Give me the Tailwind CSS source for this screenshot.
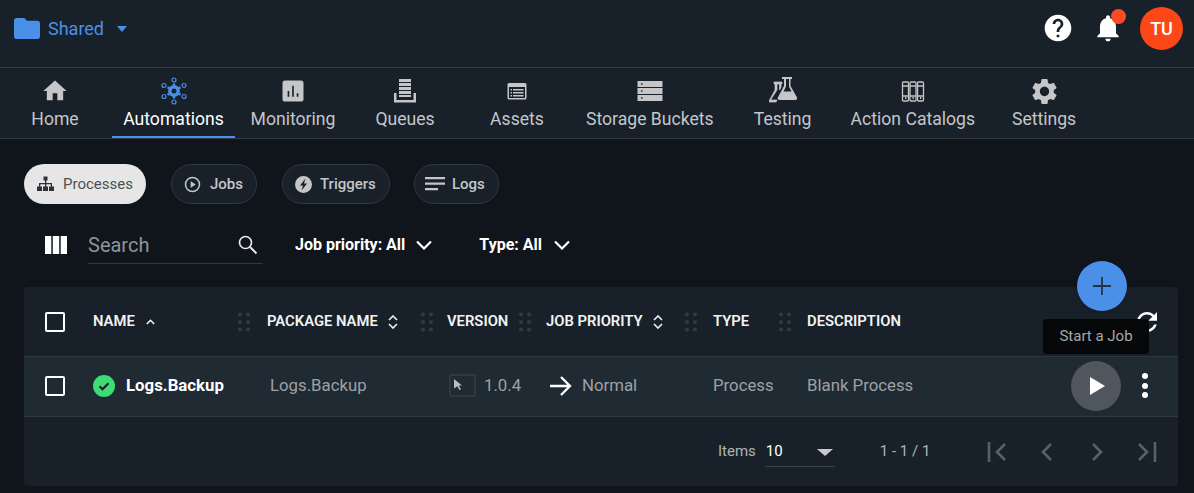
<!DOCTYPE html>
<html lang="en">
<head>
  <meta charset="UTF-8" />
  <title>Processes</title>
  <script src="https://cdn.jsdelivr.net/npm/@tailwindcss/browser@4"></script>
</head>
<body class="bg-[#0f151b] font-[Roboto,sans-serif] h-[493px] overflow-hidden relative">
  <!-- Top bar -->
  <header class="h-[68px] bg-[#18212a] border-b border-[#333a41] flex items-center pl-[14px] pr-[11px] pb-[11px]">
    <svg class="w-[26px] h-[21px] text-[#4a90e8]" viewBox="2 4 20 16" preserveAspectRatio="none" fill="currentColor"><path d="M10 4H4c-1.1 0-1.99.9-1.99 2L2 18c0 1.1.9 2 2 2h16c1.1 0 2-.9 2-2V8c0-1.1-.9-2-2-2h-8l-2-2z"/></svg>
    <span class="ml-[8px] text-[18px] text-[#4a90e8]">Shared</span>
    <span class="ml-[13px] mt-[1px] w-0 h-0 border-x-[5.5px] border-x-transparent border-t-[6px] border-t-[#4a90e8]"></span>
    <div class="ml-auto flex items-center">
      <svg class="w-[32px] h-[32px] text-white" viewBox="0 0 24 24" fill="currentColor"><path d="M12 2C6.48 2 2 6.48 2 12s4.48 10 10 10 10-4.48 10-10S17.52 2 12 2zm1 17h-2v-2h2v2zm2.07-7.75l-.9.92C13.45 12.9 13 13.5 13 15h-2v-.5c0-1.1.45-2.1 1.17-2.83l1.24-1.26c.37-.36.59-.86.59-1.41 0-1.1-.9-2-2-2s-2 .9-2 2H8c0-2.21 1.79-4 4-4s4 1.79 4 4c0 .88-.36 1.68-.93 2.25z"/></svg>
      <div class="relative ml-[18px] w-[32px] h-[32px]">
        <svg class="w-[32px] h-[32px] text-white" viewBox="0 0 24 24" fill="currentColor"><path d="M12 22c1.1 0 2-.9 2-2h-4c0 1.1.89 2 2 2zm6-6v-5c0-3.07-1.64-5.64-4.5-6.32V4c0-.83-.67-1.5-1.5-1.5s-1.5.67-1.5 1.5v.68C7.63 5.36 6 7.92 6 11v5l-2 2v1h16v-1l-2-2z"/></svg>
        <span class="absolute top-[-3px] right-[-2px] w-[15px] h-[15px] rounded-full bg-[#fb4c26]"></span>
      </div>
      <div class="ml-[16px] w-[43px] h-[43px] rounded-full bg-[#fd4716] text-white text-[18px] font-medium flex items-center justify-center">TU</div>
    </div>
  </header>

  <!-- Main nav -->
  <nav class="h-[71px] bg-[#18212a] border-b border-[#333a41] flex gap-[2px] text-[17.6px] text-[#c4c6c8]">
    <a class="min-w-[110px] px-3 flex flex-col items-center pt-[9px]">
      <svg class="w-[28px] h-[28px]" viewBox="0 0 24 24" fill="currentColor"><path d="M10 20v-6h4v6h5v-8h3L12 3 2 12h3v8z"/></svg>
      <span class="mt-[1px] leading-[26px]">Home</span>
    </a>
    <a class="w-[123px] mr-[1px] flex flex-col items-center pt-[9px] border-b-2 border-[#4a90e8] h-[70px] text-white">
      <svg class="w-[28px] h-[28px] text-[#4a90e8]" viewBox="-14 -14 28 28" fill="none" stroke="currentColor" stroke-width="1.2">
        <circle cx="0" cy="-11" r="2"/><circle cx="0" cy="11" r="2"/><circle cx="-10" cy="-5.5" r="2"/><circle cx="10" cy="-5.5" r="2"/><circle cx="-10" cy="5.5" r="2"/><circle cx="10" cy="5.5" r="2"/>
        <circle cx="0" cy="0" r="4.2" stroke-width="3.4"/>
        <path d="M0-7.5v2M0 7.5v-2M-6.5-3.7l1.7 1M6.5-3.7l-1.7 1M-6.5 3.7l1.7-1M6.5 3.7l-1.7-1" stroke-width="2.4"/>
      </svg>
      <span class="mt-[1px] leading-[26px]">Automations</span>
    </a>
    <a class="min-w-[110px] px-3 flex flex-col items-center pt-[9px]">
      <svg class="w-[28px] h-[28px]" viewBox="0 0 24 24" fill="currentColor"><path d="M19 3H5c-1.1 0-2 .9-2 2v14c0 1.1.9 2 2 2h14c1.1 0 2-.9 2-2V5c0-1.1-.9-2-2-2zM8.8 17H7.4v-5h1.4v5zm3.9 0h-1.4V7.5h1.4V17zm3.9 0h-1.4v-3h1.4v3z" fill-rule="evenodd"/></svg>
      <span class="mt-[1px] leading-[26px]">Monitoring</span>
    </a>
    <a class="min-w-[110px] px-3 flex flex-col items-center pt-[9px]">
      <svg class="w-[28px] h-[28px]" viewBox="0 0 28 28" fill="currentColor"><path d="M8 2h12v3H8zM8 6h12v3H8zM8 10h12v3H8zM8 14h12v3H8zM8 18h12v2H8zM3 16h2.5v7h17v-7H25v9.5H3z"/></svg>
      <span class="mt-[1px] leading-[26px]">Queues</span>
    </a>
    <a class="min-w-[110px] px-3 flex flex-col items-center pt-[9px]">
      <svg class="w-[28px] h-[28px]" viewBox="0 0 28 28"><rect x="4.500" y="6" width="19" height="16.5" rx="1.5" fill="currentColor"/><rect x="6" y="10" width="16" height="11" fill="#18212a"/><path d="M7.5 12H9v1.500H7.500zM10 12h10.500v1.500H10zM7.500 15H9v1.500H7.500zM10 15h10.500v1.500H10zM7.500 18H9v1.500H7.500zM10 18h10.500v1.500H10z" fill="currentColor"/></svg>
      <span class="mt-[1px] leading-[26px]">Assets</span>
    </a>
    <a class="min-w-[110px] px-3 flex flex-col items-center pt-[9px]">
      <svg class="w-[28px] h-[28px]" viewBox="0 0 28 28" fill="currentColor"><path fill-rule="evenodd" d="M1.500 4h25v6h-25zM5 6.200v1.500h1.500V6.200zM1.500 11h25v6h-25zM5 13.200v1.500h1.500v-1.500zM1.500 18h25v6h-25zM5 20.200v1.500h1.500v-1.500z"/></svg>
      <span class="mt-[1px] leading-[26px]">Storage Buckets</span>
    </a>
    <a class="min-w-[110px] px-3 flex flex-col items-center pt-[9px]">
      <svg class="w-[28px] h-[28px]" viewBox="0 0 28 28" fill="currentColor"><path fill-rule="evenodd" d="M13 0h10v2h-1.500v7L28 20.500c.5 1.300-.3 2.500-1.700 2.500H10.500c-1.500 0-2.200-1.200-1.700-2.500L15 9V2h-2zM17 2v7.500L14.500 14.500h8L20 9.500V2z"/><path stroke="currentColor" stroke-width=".7" d="M5 5h8v2h-1v3.500l-1.500 2.500V7H8v6L1.500 23H8l-.9 2H0c-.4 0 0-1 .3-1.500L6 13V7H5z"/></svg>
      <span class="mt-[1px] leading-[26px]">Testing</span>
    </a>
    <a class="min-w-[110px] px-3 -ml-[1px] flex flex-col items-center pt-[9px]">
      <svg class="w-[28px] h-[28px]" viewBox="0 0 28 28" fill="none" stroke="currentColor" stroke-width="1.3"><rect x="3.500" y="5" width="6" height="19" rx="1"/><rect x="11" y="5" width="6" height="19" rx="1"/><rect x="18.500" y="5" width="6" height="19" rx="1"/><path d="M3.500 9h6M11 9h6M18.500 9h6M3.500 19h6M11 19h6M18.500 19h6"/><path d="M6 21h1.300M13.500 21h1.300M21 21h1.300" stroke-width="2"/></svg>
      <span class="mt-[1px] leading-[26px]">Action Catalogs</span>
    </a>
    <a class="min-w-[110px] px-3 flex flex-col items-center pt-[9px]">
      <svg class="w-[31px] h-[31px] -my-[1.5px]" viewBox="0 0 24 24" fill="currentColor"><path d="M19.14 12.94c.04-.3.06-.61.06-.94 0-.32-.02-.64-.07-.94l2.03-1.58c.18-.14.23-.41.12-.61l-1.92-3.32c-.12-.22-.37-.29-.59-.22l-2.39.96c-.5-.38-1.03-.7-1.62-.94l-.36-2.54c-.04-.24-.24-.41-.48-.41h-3.84c-.24 0-.43.17-.47.41l-.36 2.54c-.59.24-1.13.57-1.62.94l-2.39-.96c-.22-.08-.47 0-.59.22L2.74 8.87c-.12.21-.08.47.12.61l2.03 1.58c-.05.3-.09.63-.09.94s.02.64.07.94l-2.03 1.58c-.18.14-.23.41-.12.61l1.92 3.32c.12.22.37.29.59.22l2.39-.96c.5.38 1.03.7 1.62.94l.36 2.54c.05.24.24.41.48.41h3.84c.24 0 .44-.17.47-.41l.36-2.54c.59-.24 1.13-.56 1.62-.94l2.39.96c.22.08.47 0 .59-.22l1.920-3.32c.12-.22.07-.47-.12-.61l-2.01-1.58zM12 15.6c-1.98 0-3.6-1.62-3.6-3.6s1.62-3.6 3.6-3.6 3.6 1.62 3.6 3.6-1.62 3.6-3.6 3.6z"/></svg>
      <span class="mt-[1px] leading-[26px]">Settings</span>
    </a>
  </nav>

  <!-- Tabs -->
  <div class="mt-[25px] ml-[24px] flex text-[15px] font-medium text-[#c4c6c8] h-[40px]">
    <div class="w-[122px] rounded-full bg-[#e6e6e6] text-[#4c5257] font-normal flex items-center pl-[12px]">
      <svg class="w-[19px] h-[19px] text-[#2c3238]" viewBox="0 0 19 19" fill="currentColor"><path d="M7.5 1.5h4v4h-1.2V8h5.700v3.500h2V16h-5v-4.500h1.800V9.300h-4.500v2.200h1.700V16h-5v-4.500h2V9.300H4.300v2.200H6V16H1v-4.500h2V8h6V5.500H7.500z"/></svg>
      <span class="ml-[8px]">Processes</span>
    </div>
    <div class="ml-[25px] w-[86px] rounded-full bg-[#18212a] border border-[#30373e] flex items-center pl-[11px]">
      <svg class="w-[19px] h-[19px]" viewBox="0 0 19 19" fill="none" stroke="currentColor" stroke-width="1.5"><circle cx="9.5" cy="9.5" r="7"/><path d="M7.700 6.200l5 3.300-5 3.300z" fill="currentColor" stroke="none"/></svg>
      <span class="ml-[8px]">Jobs</span>
    </div>
    <div class="ml-[25px] w-[108px] rounded-full bg-[#18212a] border border-[#30373e] flex items-center pl-[11px]">
      <svg class="w-[19px] h-[19px]" viewBox="0 0 19 19" fill="currentColor"><path fill-rule="evenodd" d="M9.500 1a8.500 8.500 0 1 0 0 17 8.500 8.500 0 0 0 0-17zM11.500 3.500L6 10.500h3L7.500 15.500l5.500-7h-3z"/></svg>
      <span class="ml-[7px]">Triggers</span>
    </div>
    <div class="ml-[24px] w-[85px] rounded-full bg-[#18212a] border border-[#30373e] flex items-center pl-[10px]">
      <svg class="w-[20px] h-[14px]" viewBox="0 0 20 14" fill="currentColor"><path d="M0 0h20v2.200H0zM0 5.500h20v2.200H0zM0 11h13v2.200H0z"/></svg>
      <span class="ml-[7px]">Logs</span>
    </div>
  </div>

  <!-- Filters -->
  <div class="mt-[21px] h-[40px] pl-[45px] flex items-center text-[16px] font-bold text-white">
    <svg class="w-[22px] h-[18px]" viewBox="0 0 22 18" fill="currentColor"><path d="M0 0h6.300v18H0zM7.800 0h6.400v18H7.800zM15.700 0H22v18h-6.300z"/></svg>
    <div class="ml-[21px] w-[175px] h-[39px] self-start border-b border-[#30373e] flex items-center justify-between pr-[5px] font-normal">
      <span class="text-[20px] text-[#8f9499] mt-[2px]">Search</span>
      <svg class="w-[21px] h-[21px]" viewBox="0 0 21 21" fill="none" stroke="#e8e8e8" stroke-width="1.7"><circle cx="8.500" cy="8.500" r="6"/><path d="M13 13l6.500 6.500" stroke-width="2"/></svg>
    </div>
    <span class="ml-[32px]">Job priority: All</span>
    <svg class="ml-[11px] w-[16px] h-[10px]" viewBox="0 0 16 10" fill="none" stroke="currentColor" stroke-width="2.2"><path d="M1 1.500l7 7 7-7"/></svg>
    <span class="ml-[47px]">Type: All</span>
    <svg class="ml-[12px] w-[16px] h-[10px]" viewBox="0 0 16 10" fill="none" stroke="currentColor" stroke-width="2.2"><path d="M1 1.500l7 7 7-7"/></svg>
  </div>

  <!-- Table -->
  <div class="mt-[22px] mr-[16px] ml-[24px] h-[199px] rounded-[4px] bg-[#18212a] overflow-hidden">
    <div class="h-[70px] border-b border-[#2f3841] grid grid-cols-[69px_174px_180px_99px_167px_94px_1fr] items-center text-[14.8px] font-semibold text-[#f2f2f2]">
      <div class="pl-[21px]"><span class="block w-[20px] h-[20px] border-2 border-white rounded-[2px]"></span></div>
      <div class="flex items-center justify-between pr-[17px]">
        <span class="flex items-center">NAME<svg class="ml-[11px] w-[9px] h-[6px]" viewBox="0 0 9 6" fill="none" stroke="currentColor" stroke-width="1.6"><path d="M.8 5l3.700-3.700L8.200 5"/></svg></span>
        <svg class="w-[12px] h-[20px] text-[#323a42]" viewBox="0 0 12 20" fill="currentColor"><circle cx="2" cy="2.5" r="2"/><circle cx="10" cy="2.5" r="2"/><circle cx="2" cy="10" r="2"/><circle cx="10" cy="10" r="2"/><circle cx="2" cy="17.5" r="2"/><circle cx="10" cy="17.5" r="2"/></svg>
      </div>
      <div class="flex items-center justify-between pr-[14px]">
        <span class="flex items-center">PACKAGE NAME<svg class="ml-[10px] w-[10px] h-[14px]" viewBox="0 0 10 14" fill="none" stroke="currentColor" stroke-width="1.6"><path d="M1 5l4-4 4 4M1 9l4 4 4-4"/></svg></span>
        <svg class="w-[12px] h-[20px] text-[#323a42]" viewBox="0 0 12 20" fill="currentColor"><circle cx="2" cy="2.5" r="2"/><circle cx="10" cy="2.5" r="2"/><circle cx="2" cy="10" r="2"/><circle cx="10" cy="10" r="2"/><circle cx="2" cy="17.5" r="2"/><circle cx="10" cy="17.5" r="2"/></svg>
      </div>
      <div class="flex items-center justify-between pr-[15px]">
        <span>VERSION</span>
        <svg class="w-[12px] h-[20px] text-[#323a42]" viewBox="0 0 12 20" fill="currentColor"><circle cx="2" cy="2.5" r="2"/><circle cx="10" cy="2.5" r="2"/><circle cx="2" cy="10" r="2"/><circle cx="10" cy="10" r="2"/><circle cx="2" cy="17.5" r="2"/><circle cx="10" cy="17.5" r="2"/></svg>
      </div>
      <div class="flex items-center justify-between pr-[16px]">
        <span class="flex items-center">JOB PRIORITY<svg class="ml-[10px] w-[10px] h-[14px]" viewBox="0 0 10 14" fill="none" stroke="currentColor" stroke-width="1.6"><path d="M1 5l4-4 4 4M1 9l4 4 4-4"/></svg></span>
        <svg class="w-[12px] h-[20px] text-[#323a42]" viewBox="0 0 12 20" fill="currentColor"><circle cx="2" cy="2.5" r="2"/><circle cx="10" cy="2.5" r="2"/><circle cx="2" cy="10" r="2"/><circle cx="10" cy="10" r="2"/><circle cx="2" cy="17.5" r="2"/><circle cx="10" cy="17.5" r="2"/></svg>
      </div>
      <div class="flex items-center justify-between pr-[16px]">
        <span>TYPE</span>
        <svg class="w-[12px] h-[20px] text-[#323a42]" viewBox="0 0 12 20" fill="currentColor"><circle cx="2" cy="2.5" r="2"/><circle cx="10" cy="2.5" r="2"/><circle cx="2" cy="10" r="2"/><circle cx="10" cy="10" r="2"/><circle cx="2" cy="17.5" r="2"/><circle cx="10" cy="17.5" r="2"/></svg>
      </div>
      <div class="flex items-center justify-between pr-[16px]">
        <span>DESCRIPTION</span>
        <svg class="w-[30px] h-[30px] text-white" viewBox="0 0 24 24" fill="currentColor"><path d="M17.650 6.350C16.200 4.900 14.210 4 12 4c-4.420 0-7.990 3.580-7.990 8s3.570 8 7.990 8c3.730 0 6.840-2.550 7.730-6h-2.080c-.82 2.330-3.040 4-5.650 4-3.310 0-6-2.690-6-6s2.690-6 6-6c1.660 0 3.140.69 4.220 1.780L13 11h7V4l-2.350 2.350z"/></svg>
      </div>
    </div>
    <div class="h-[60px] pb-[2px] bg-[#202a33] border-b border-[#2f3841] grid grid-cols-[69px_174px_180px_99px_167px_94px_1fr] items-center text-[16.8px] text-[#9da1a6]">
      <div class="pl-[21px]"><span class="block w-[20px] h-[20px] border-2 border-white rounded-[2px]"></span></div>
      <div class="flex items-center">
        <svg class="w-[22px] h-[22px]" viewBox="0 0 22 22"><circle cx="11" cy="11" r="11" fill="#3ddc74"/><path d="M6.500 11.200l3 3 6-6" fill="none" stroke="#18212a" stroke-width="2.2"/></svg>
        <span class="ml-[11px] font-bold text-white">Logs.Backup</span>
      </div>
      <div class="pl-[3px]">Logs.Backup</div>
      <div class="flex items-center pl-[2px]">
        <span class="w-[27px] h-[23px] border-2 border-[#2f3841] rounded-[2px] flex pl-[3px] pt-[3px]">
          <svg class="w-[9px] h-[11px] text-[#b8bcc0]" viewBox="0 0 9 11" fill="currentColor"><path d="M0 0l8 6.500H4.800L7 10.500 5.500 11 3.300 7.300 0 9.500z"/></svg>
        </span>
        <span class="ml-[8px]">1.0.4</span>
      </div>
      <div class="flex items-center pl-[4px]">
        <svg class="w-[22px] h-[22px]" viewBox="0 0 22 22" fill="none" stroke="white" stroke-width="2.3"><path d="M0 11h20M11 2l9 9-9 9"/></svg>
        <span class="ml-[10px]">Normal</span>
      </div>
      <div>Process</div>
      <div class="flex items-center justify-between pr-[30px]">
        <span>Blank Process</span>
        <div class="flex items-center">
          <span class="w-[50px] h-[50px] rounded-full bg-[#4f565d] flex items-center justify-center">
            <svg class="w-[15px] h-[18px] ml-[3px]" viewBox="0 0 15 18" fill="white"><path d="M0 0l15 9L0 18z"/></svg>
          </span>
          <span class="ml-[21px] flex flex-col gap-[3.5px]">
            <i class="block w-[6px] h-[6px] rounded-full bg-white"></i>
            <i class="block w-[6px] h-[6px] rounded-full bg-white"></i>
            <i class="block w-[6px] h-[6px] rounded-full bg-white"></i>
          </span>
        </div>
      </div>
    </div>
    <div class="h-[69px] flex items-center pl-[694px] text-[15px] text-[#b0b3b6]">
      <span class="-mt-[1px]">Items</span>
      <div class="ml-[9px] w-[70px] h-[30px] border-b border-[#3a424a] flex items-center justify-between pr-[2px] text-white">
        <span class="ml-[1px]">10</span>
        <span class="w-0 h-0 mt-[3px] border-x-[8px] border-x-transparent border-t-[7px] border-t-[#c8cacc]"></span>
      </div>
      <span class="ml-[45px] -mt-[1px]">1 - 1 / 1</span>
      <svg class="ml-[57px] w-[20px] h-[20px]" viewBox="0 0 20 20" fill="none" stroke="#5a6066" stroke-width="2.6"><path d="M2 0v20M18 2l-8 8 8 8"/></svg>
      <svg class="ml-[33px] w-[14px] h-[20px]" viewBox="0 0 14 20" fill="none" stroke="#5a6066" stroke-width="2.6"><path d="M11 2l-8 8 8 8"/></svg>
      <svg class="ml-[36px] w-[14px] h-[20px]" viewBox="0 0 14 20" fill="none" stroke="#5a6066" stroke-width="2.6"><path d="M3 2l8 8-8 8"/></svg>
      <svg class="ml-[33px] w-[20px] h-[20px]" viewBox="0 0 20 20" fill="none" stroke="#5a6066" stroke-width="2.6"><path d="M18 0v20M2 2l8 8-8 8"/></svg>
    </div>
  </div>

  <!-- Floating add button and tooltip -->
  <button class="absolute left-[1077px] top-[261px] w-[50px] h-[50px] rounded-full bg-[#4a90e8] flex items-center justify-center shadow-md">
    <svg class="w-[18px] h-[18px]" viewBox="0 0 18 18" fill="none" stroke="#263442" stroke-width="1.8"><path d="M9 0v18M0 9h18"/></svg>
  </button>
  <div class="absolute left-[1043px] top-[319px] w-[106px] h-[35px] rounded-[4px] bg-[#050709] text-[15px] text-[#a5a8ab] flex items-center justify-center">Start a Job</div>
</body>
</html>
